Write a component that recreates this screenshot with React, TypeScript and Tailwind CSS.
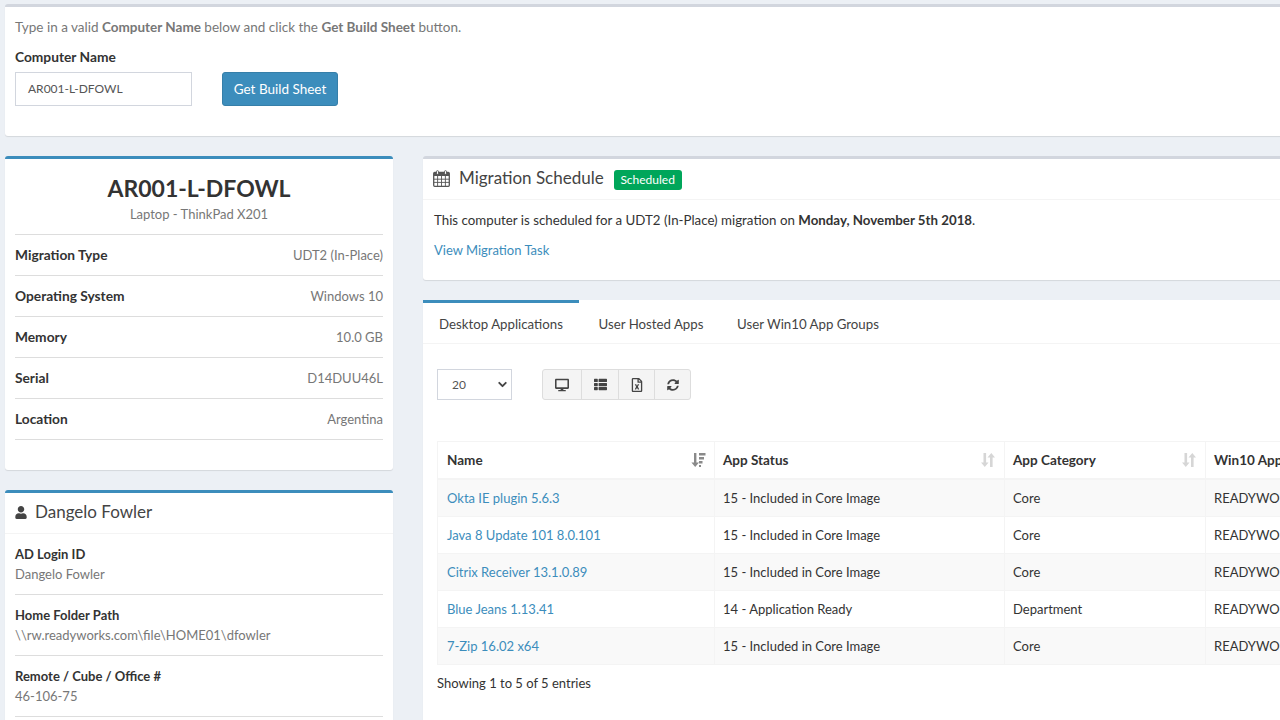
import { FaDesktop, FaThList, FaRegFileExcel, FaSyncAlt, FaUser } from "react-icons/fa";
import { ChevronDown } from "lucide-react";

const specs = [
  ["Migration Type", "UDT2 (In-Place)"],
  ["Operating System", "Windows 10"],
  ["Memory", "10.0 GB"],
  ["Serial", "D14DUU46L"],
  ["Location", "Argentina"],
];

const user = [
  ["AD Login ID", "Dangelo Fowler"],
  ["Home Folder Path", "\\\\rw.readyworks.com\\file\\HOME01\\dfowler"],
  ["Remote / Cube / Office #", "46-106-75"],
];

const apps = [
  ["Okta IE plugin 5.6.3", "15 - Included in Core Image", "Core"],
  ["Java 8 Update 101 8.0.101", "15 - Included in Core Image", "Core"],
  ["Citrix Receiver 13.1.0.89", "15 - Included in Core Image", "Core"],
  ["Blue Jeans 1.13.41", "14 - Application Ready", "Department"],
  ["7-Zip 16.02 x64", "15 - Included in Core Image", "Core"],
];

const columns: [string, number][] = [
  ["Name", 277],
  ["App Status", 290],
  ["App Category", 201],
  ["Win10 App Status", 132],
];

function CalendarIcon() {
  return (
    <svg viewBox="0 0 17 17" className="h-[17px] w-[17px] text-[#555]" fill="none" stroke="currentColor">
      <rect x="0.7" y="2.500" width="15.600" height="13.800" rx="1" strokeWidth="1.300" />
      <rect x="1" y="3" width="15" height="3" fill="currentColor" stroke="none" />
      <path d="M1 9.200h15M1 12.400h15M4.600 6v10M8.500 6v10M12.400 6v10" strokeWidth="0.900" />
      <rect x="3.500" y="0.700" width="2" height="3.600" rx="0.800" fill="#fff" strokeWidth="0.900" />
      <rect x="11.500" y="0.700" width="2" height="3.600" rx="0.800" fill="#fff" strokeWidth="0.900" />
    </svg>
  );
}

function SortIcon({ active }: { active?: boolean }) {
  if (active) {
    return (
      <svg viewBox="0 0 16 16" className="h-[16px] w-[16px] text-[#8a8a8a]" fill="currentColor">
        <path d="M4 1h2.400v9.500H9L5.200 15 1.400 10.500H4z" />
        <path d="M9 1h6.500v2.500H9zM9 5h5v2.500H9zM9 9h3.500v2.500H9zM9 13h2v2H9z" />
      </svg>
    );
  }
  return (
    <svg viewBox="0 0 16 16" className="h-[16px] w-[16px] text-[#d6d6d6]" fill="currentColor">
      <path d="M3.500 1h2.600v9.500h2.400L4.800 15 1 10.500h2.500z" />
      <path d="M10 15h2.600V5.500H15L11.300 1 7.500 5.500H10z" />
    </svg>
  );
}

export default function App() {
  return (
    <div className="h-[720px] w-[1280px] overflow-hidden bg-[#ecf0f5] font-['Lato','Liberation_Sans',sans-serif] text-[13px] text-[#333]">
      <div className="w-[1600px] pl-[5px] pt-[4px]">
        <div className="h-[132px] rounded-[3px] border-t-[3px] border-[#d2d6de] bg-white px-[10px] pt-[10px] shadow-[0_1px_1px_rgba(0,0,0,0.1)]">
          <p className="text-[13.500px] leading-[20px] text-[#777]">
            Type in a valid <b>Computer Name</b> below and click the <b>Get Build Sheet</b> button.
          </p>
          <label className="mt-[10px] block text-[13.750px] font-bold leading-[20px]">Computer Name</label>
          <div className="mt-[5px] flex gap-[30px]">
            <div className="flex h-[34px] w-[177px] items-center border border-[#d2d6de] px-[12px] text-[12px] text-[#555]">AR001-L-DFOWL</div>
            <button className="h-[34px] w-[116px] rounded-[3px] border border-[#367fa9] bg-[#3c8dbc] text-[13.500px] text-white">Get Build Sheet</button>
          </div>
        </div>

        <div className="mt-[20px] flex items-start gap-[30px]">
          <div className="flex w-[388px] shrink-0 flex-col gap-[20px]">
            <div className="h-[314px] rounded-[3px] border-t-[3px] border-[#3c8dbc] bg-white px-[10px] pt-[14px] shadow-[0_1px_1px_rgba(0,0,0,0.1)]">
              <h3 className="text-center text-[23px] font-bold leading-[30px] text-[#333]">AR001-L-DFOWL</h3>
              <p className="mt-[1px] text-center leading-[20px] text-[#777]">Laptop - ThinkPad X201</p>
              <div className="mt-[10px] border-t border-[#ddd]">
                {specs.map(([k, v]) => (
                  <div key={k} className="flex h-[41px] items-center justify-between border-b border-[#ddd]">
                    <b className="text-[13.750px]">{k}</b>
                    <span className="pt-[1px] text-[#777]">{v}</span>
                  </div>
                ))}
              </div>
            </div>

            <div className="rounded-[3px] border-t-[3px] border-[#3c8dbc] bg-white shadow-[0_1px_1px_rgba(0,0,0,0.1)]">
              <div className="flex h-[41px] items-center gap-[8px] border-b border-[#f4f4f4] px-[10px] pb-[2px] text-[17px] text-[#444]">
                <FaUser className="h-[13px] w-[12px]" />
                <span>Dangelo Fowler</span>
              </div>
              <div className="px-[10px] pt-[10px] leading-[20px]">
                {user.map(([k, v]) => (
                  <div key={k} className="mb-[10px] border-b border-[#ddd] pb-[10px]">
                    <b className="block">{k}</b>
                    <span className="text-[#777]">{v}</span>
                  </div>
                ))}
              </div>
              <div className="h-[200px]" />
            </div>
          </div>

          <div className="flex min-w-0 flex-1 flex-col gap-[20px] pr-[100px]">
            <div className="h-[124px] rounded-[3px] border-t-[3px] border-[#d2d6de] bg-white shadow-[0_1px_1px_rgba(0,0,0,0.1)]">
              <div className="flex h-[41px] items-center border-b border-[#f4f4f4] px-[10px] pb-[2px] text-[17px] text-[#444]">
                <CalendarIcon />
                <span className="ml-[9px]">Migration Schedule</span>
                <span className="ml-[10px] mt-[4px] flex h-[20px] w-[68px] items-center justify-center rounded-[3px] bg-[#00a65a] text-[12px] text-white">Scheduled</span>
              </div>
              <div className="px-[11px] pt-[10px] leading-[20px]">
                <p className="text-[13.300px]">This computer is scheduled for a UDT2 (In-Place) migration on <b>Monday, November 5th 2018</b>.</p>
                <a className="mt-[10px] block text-[#3c8dbc]">View Migration Task</a>
              </div>
            </div>

            <div className="h-[500px] rounded-[3px] bg-white shadow-[0_1px_1px_rgba(0,0,0,0.1)]">
              <div className="flex h-[44px] border-b border-[#f4f4f4] text-[13.250px] text-[#444]">
                <div className="flex w-[156px] items-center justify-center border-t-[3px] border-[#3c8dbc] pt-[4px]">Desktop Applications</div>
                <div className="flex w-[144px] items-center justify-center pt-[7px]">User Hosted Apps</div>
                <div className="flex w-[170px] items-center justify-center pt-[7px]">User Win10 App Groups</div>
              </div>

              <div className="px-[14px]">
                <div className="mt-[25px] flex items-center">
                  <div className="flex h-[31px] w-[75px] items-center justify-between border border-[#d2d6de] pl-[14px] pr-[2px] text-[12px] text-[#555]">
                    20
                    <ChevronDown className="h-[13px] w-[13px] text-[#444]" strokeWidth={3.500} />
                  </div>
                  <div className="ml-[30px] flex h-[31px] overflow-hidden rounded-[3px] border border-[#ddd] bg-[#f4f4f4] text-[#444]">
                    <div className="flex w-[39px] items-center justify-center border-r border-[#ddd]"><FaDesktop className="h-[14px] w-[14px]" /></div>
                    <div className="flex w-[37px] items-center justify-center border-r border-[#ddd]"><FaThList className="h-[13px] w-[13px]" /></div>
                    <div className="flex w-[36px] items-center justify-center border-r border-[#ddd]"><FaRegFileExcel className="h-[14px] w-[14px]" /></div>
                    <div className="flex w-[35px] items-center justify-center"><FaSyncAlt className="h-[12px] w-[12px]" /></div>
                  </div>
                </div>

                <table className="mt-[41px] w-[900px] table-fixed border-collapse">
                  <thead>
                    <tr className="h-[37px] border-b-2 border-[#f4f4f4]">
                      {columns.map(([h, w], i) => (
                        <th key={h} style={{ width: w }} className={i === 0 ? "border border-[#f4f4f4] pl-[9px] pr-[8px] pt-[1px] text-left text-[13.500px] font-bold" : "border border-[#f4f4f4] pl-[8px] pr-[8px] pt-[1px] text-left text-[13.500px] font-bold"}>
                          <div className="flex items-center justify-between">
                            <span className="whitespace-nowrap">{h}</span>
                            {i < 3 && <SortIcon active={i === 0} />}
                          </div>
                        </th>
                      ))}
                    </tr>
                  </thead>
                  <tbody>
                    {apps.map((row, i) => (
                      <tr key={row[0]} className={i === 0 ? "h-[38px] bg-[#f9f9f9]" : i % 2 === 0 ? "h-[37px] bg-[#f9f9f9]" : "h-[37px]"}>
                        <td className="border border-[#f4f4f4] pl-[9px] pt-[2px] text-[#3c8dbc]">{row[0]}</td>
                        <td className="border border-[#f4f4f4] pl-[8px] pt-[2px]">{row[1]}</td>
                        <td className="border border-[#f4f4f4] pl-[8px] pt-[2px]">{row[2]}</td>
                        <td className="border border-[#f4f4f4] pl-[8px] pt-[2px]">READYWORKS</td>
                      </tr>
                    ))}
                  </tbody>
                </table>
                <p className="mt-[8px] leading-[20px]">Showing 1 to 5 of 5 entries</p>
              </div>
            </div>
          </div>
        </div>
      </div>
    </div>
  );
}
